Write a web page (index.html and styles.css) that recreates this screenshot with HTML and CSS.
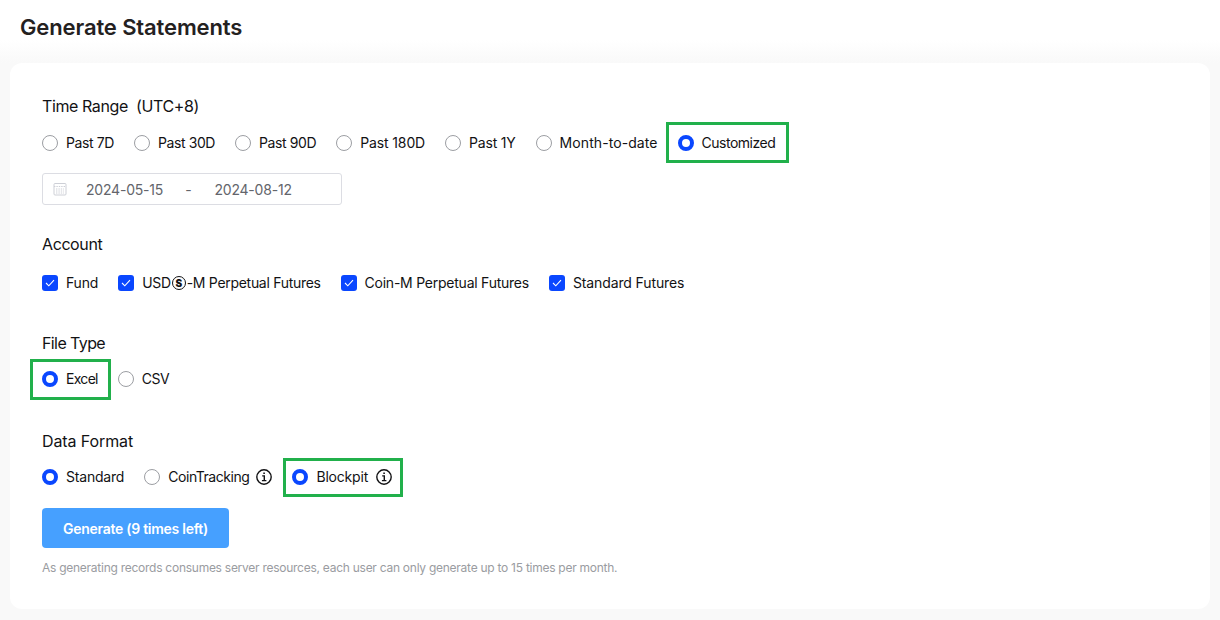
FILE: index.html
```html
<!DOCTYPE html>
<html lang="en">
<head>
<meta charset="utf-8">
<title>Generate Statements</title>
<link rel="stylesheet" href="styles.css">
</head>
<body>
<div class="page">
  <h1 class="title">Generate Statements</h1>
  <main class="card">
    <section class="group group-time">
      <div class="label">Time Range&nbsp; (UTC+8)</div>
      <div class="options">
        <label class="opt tight"><span class="radio"></span>Past 7D</label>
        <label class="opt tight"><span class="radio"></span>Past 30D</label>
        <label class="opt tight"><span class="radio"></span>Past 90D</label>
        <label class="opt relaxed"><span class="radio"></span>Past 180D</label>
        <label class="opt snug"><span class="radio"></span>Past 1Y</label>
        <label class="opt open"><span class="radio"></span>Month-to-date</label>
        <label class="opt tighter mark mark-custom"><span class="radio on"></span>Customized</label>
      </div>
      <div class="range">
        <svg class="cal" width="14" height="14" viewBox="0 0 14 14" fill="none" stroke="#cdcfd6"><rect x="1" y="1.5" width="12" height="11.5" rx="1"/><path d="M1 4.5h12M3 7h8M3 9h8M3 11h8" stroke-dasharray="1.4 1"/></svg>
        <span class="date date-a">2024-05-15</span>
        <span class="dash">-</span>
        <span class="date">2024-08-12</span>
      </div>
    </section>
    <section class="group group-account">
      <div class="label">Account</div>
      <div class="options">
        <label class="opt snug"><span class="check"><svg width="10" height="8" viewBox="0 0 10 8" fill="none"><path d="M1 4l2.8 2.8L9 1.2" stroke="#fff" stroke-width="1.1"/></svg></span>Fund</label>
        <label class="opt snug-more"><span class="check"><svg width="10" height="8" viewBox="0 0 10 8" fill="none"><path d="M1 4l2.8 2.8L9 1.2" stroke="#fff" stroke-width="1.1"/></svg></span>USD<span class="usds">S</span>-M Perpetual Futures</label>
        <label class="opt snug-coin"><span class="check"><svg width="10" height="8" viewBox="0 0 10 8" fill="none"><path d="M1 4l2.8 2.8L9 1.2" stroke="#fff" stroke-width="1.1"/></svg></span>Coin-M Perpetual Futures</label>
        <label class="opt relaxed"><span class="check"><svg width="10" height="8" viewBox="0 0 10 8" fill="none"><path d="M1 4l2.8 2.8L9 1.2" stroke="#fff" stroke-width="1.1"/></svg></span>Standard Futures</label>
      </div>
    </section>
    <section class="group group-file">
      <div class="label label-narrow">File Type</div>
      <div class="options">
        <label class="opt narrowest mark mark-excel"><span class="radio on"></span>Excel</label>
        <label class="opt tighter"><span class="radio"></span>CSV</label>
      </div>
    </section>
    <section class="group group-format">
      <div class="label label-wide">Data Format</div>
      <div class="options">
        <label class="opt snug"><span class="radio on"></span>Standard</label>
        <label class="opt tight-more"><span class="radio"></span>CoinTracking<svg class="info" width="16" height="16" viewBox="0 0 16 16" fill="none" stroke="#121214"><circle cx="8" cy="8" r="7.2" stroke-width="1.4"/><path d="M6.2 6.9H8.3V11.6M5.9 11.6H10.4M7.3 4.3h1.6" stroke-width="1.4"/></svg></label>
        <label class="opt snug mark mark-block"><span class="radio on"></span>Blockpit<svg class="info" width="16" height="16" viewBox="0 0 16 16" fill="none" stroke="#121214"><circle cx="8" cy="8" r="7.2" stroke-width="1.4"/><path d="M6.2 6.9H8.3V11.6M5.9 11.6H10.4M7.3 4.3h1.6" stroke-width="1.4"/></svg></label>
      </div>
    </section>
    <button class="generate" type="button">Generate (9 times left)</button>
    <p class="note">As generating records consumes server resources, each user can only generate up to 15 times per month.</p>
  </main>
</div>
</body>
</html>
```
FILE: styles.css
```css
* { box-sizing: border-box; }
html, body { margin: 0; padding: 0; background: #fff; }
body { width: 1220px; height: 620px; overflow: hidden; font-family: Inter, "Liberation Sans", sans-serif; color: #121214; }
.page { height: 620px; padding: 0 10px; background: linear-gradient(#fff 40px, #f9f9f9 63px); }
.title { margin: 0; padding: 12px 0 0 10px; height: 63px; font-size: 22px; line-height: 30px; font-weight: 600; color: #24211f; letter-spacing: -0.12px; }
.card { height: 546px; padding: 32px 32px 0; background: #fff; border-radius: 12px; }
.label { font-size: 16px; line-height: 22px; letter-spacing: -0.4px; }
.label-wide { letter-spacing: -0.1px; }
.label-narrow { letter-spacing: -0.6px; }
.options { display: flex; align-items: center; gap: 20px; margin-top: 15px; height: 22px; }
.opt { position: relative; display: flex; align-items: center; font-size: 14px; line-height: 22px; white-space: nowrap; }
.narrowest { letter-spacing: -0.7px; }
.tighter { letter-spacing: -0.5px; }
.tight-more { letter-spacing: -0.45px; }
.tight { letter-spacing: -0.4px; }
.snug-more { letter-spacing: -0.3px; }
.snug-coin { letter-spacing: -0.24px; }
.snug { letter-spacing: -0.2px; }
.relaxed { letter-spacing: -0.12px; }
.open { letter-spacing: 0.08px; }
.radio { width: 16px; height: 16px; margin-right: 8px; border-radius: 50%; border: 1px solid #9c9ea3; background: #fff; flex: none; }
.radio.on { border: 4.5px solid #0a47ff; }
.check { display: flex; align-items: center; justify-content: center; width: 16px; height: 16px; margin-right: 8px; border-radius: 3px; background: #0a47ff; flex: none; }
.usds { display: inline-flex; align-items: center; justify-content: center; width: 14px; height: 14px; margin: 0 1px; border: 1.2px solid #121214; border-radius: 50%; font-size: 10px; line-height: 1; font-weight: 900; letter-spacing: 0; }
.info { margin-left: 7px; flex: none; }
.mark-block .info { margin-left: 8px; }
.mark::after { content: ""; position: absolute; border: 3px solid #21b04b; pointer-events: none; }
.mark-custom::after { left: -12px; right: -14px; top: -10px; bottom: -9px; }
.mark-excel::after { left: -12px; right: -13px; top: -9px; bottom: -10px; }
.mark-block::after { left: -9px; right: -11px; top: -8px; bottom: -9px; }
.range { display: flex; align-items: center; width: 300px; height: 32px; margin-top: 19px; padding-left: 10px; border: 1px solid #dcdde3; border-radius: 3px; font-size: 14px; letter-spacing: -0.2px; color: #63656b; }
.cal { flex: none; }
.date-a { margin-left: 19px; }
.dash { margin: 0 23px 0 22px; }
.group-account { margin-top: 28px; }
.group-account .options { margin-top: 17px; }
.group-file { margin-top: 38px; }
.group-file .options { margin-top: 14px; }
.group-format { margin-top: 40px; }
.group-format .options { margin-top: 14px; }
.generate { display: block; width: 187px; height: 40px; margin-top: 20px; border: 0; border-radius: 4px; background: #46a0ff; color: #fff; font: 600 14px/40px Inter, "Liberation Sans", sans-serif; letter-spacing: -0.27px; }
.note { margin: 11px 0 0; font-size: 12px; line-height: 18px; letter-spacing: -0.26px; color: #9a9ca1; }
```
